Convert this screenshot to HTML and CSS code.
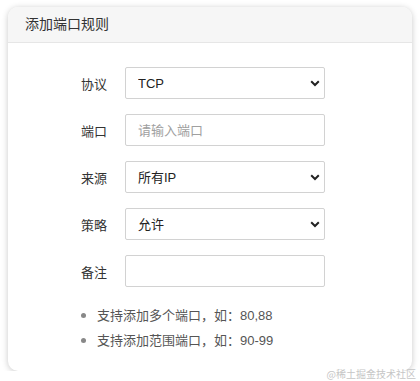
FILE: index.html
```html
<!DOCTYPE html>
<html>
<head>
    <meta charset="utf-8">
    <title>添加端口规则</title>
    <link rel="stylesheet" href="styles.css">
</head>
<body>
    <div class="panel">
        <div class="panel-heading">添加端口规则</div>
        <div class="panel-body">
            <div class="form-row">
                <label class="form-label">协议</label>
                <div class="select-wrap">
                    <select class="form-control">
                        <option>TCP</option>
                        <option>UDP</option>
                    </select>
                    <svg class="chevron" width="10" height="7" viewBox="0 0 10 7"><path d="M1.2 1.3 L5 5 L8.8 1.3" fill="none" stroke="#222" stroke-width="2"/></svg>
                </div>
            </div>
            <div class="form-row">
                <label class="form-label">端口</label>
                <input class="form-control" type="text" placeholder="请输入端口">
            </div>
            <div class="form-row">
                <label class="form-label">来源</label>
                <div class="select-wrap">
                    <select class="form-control">
                        <option>所有IP</option>
                        <option>指定IP</option>
                    </select>
                    <svg class="chevron" width="10" height="7" viewBox="0 0 10 7"><path d="M1.2 1.3 L5 5 L8.8 1.3" fill="none" stroke="#222" stroke-width="2"/></svg>
                </div>
            </div>
            <div class="form-row">
                <label class="form-label">策略</label>
                <div class="select-wrap">
                    <select class="form-control">
                        <option>允许</option>
                        <option>拒绝</option>
                    </select>
                    <svg class="chevron" width="10" height="7" viewBox="0 0 10 7"><path d="M1.2 1.3 L5 5 L8.8 1.3" fill="none" stroke="#222" stroke-width="2"/></svg>
                </div>
            </div>
            <div class="form-row">
                <label class="form-label">备注</label>
                <input class="form-control" type="text">
            </div>
            <ul class="tips">
                <li>支持添加多个端口，如：80,88</li>
                <li>支持添加范围端口，如：90-99</li>
            </ul>
        </div>
    </div>
    <div class="watermark">@稀土掘金技术社区</div>
</body>
</html>
```

FILE: styles.css
```css
body {
    margin: 0;
    padding: 7px 8px 0 8px;
    background: #fff;
    font-family: "Liberation Sans", Arial, "Noto Sans CJK SC", sans-serif;
    color: #333;
    font-size: 13px;
}

.panel {
    width: 404px;
    height: 364px;
    box-sizing: border-box;
    background: #fff;
    border-radius: 10px;
    box-shadow: 0 1px 6px rgba(0, 0, 0, 0.22);
    overflow: hidden;
}

.panel-heading {
    height: 35px;
    line-height: 35px;
    padding-left: 17px;
    background: #f6f6f6;
    border-bottom: 1px solid #e6e6e6;
    font-size: 14px;
    color: #333;
}

.panel-body {
    padding: 24px 0 0 0;
}

.form-row {
    display: flex;
    align-items: center;
    margin-bottom: 15px;
}

.form-label {
    padding-left: 73px;
    box-sizing: border-box;
    width: 117px;
    font-size: 13px;
    color: #333;
}

.select-wrap {
    position: relative;
}

.form-control {
    width: 200px;
    height: 32px;
    box-sizing: border-box;
    border: 1px solid #d2d2d2;
    border-radius: 2px;
    padding: 0 12px;
    font-family: "Liberation Sans", Arial, "Noto Sans CJK SC", sans-serif;
    font-size: 13px;
    color: #222;
    background: #fff;
    outline: none;
    display: block;
}

select.form-control {
    appearance: none;
    -webkit-appearance: none;
}

.form-control::placeholder {
    color: #a0a0a0;
}

.chevron {
    position: absolute;
    right: 5px;
    top: 13px;
    pointer-events: none;
}

.tips {
    margin: 16px 0 0 0;
    padding-left: 89px;
    color: #555;
    font-size: 13px;
}

.tips li {
    line-height: 24px;
}

.tips li::marker {
    color: #888;
    font-size: 15px;
}

.watermark {
    position: absolute;
    right: 4px;
    top: 366px;
    font-size: 10px;
    color: #c6c6c6;
    font-family: "Noto Sans CJK SC", serif;
}
```
